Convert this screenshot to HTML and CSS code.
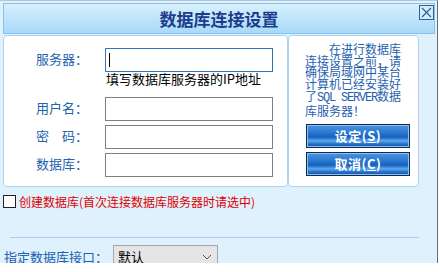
FILE: index.html
```html
<!DOCTYPE html>
<html lang="zh-CN">
<head>
<meta charset="utf-8">
<title>数据库连接设置</title>
<link rel="stylesheet" href="styles.css">
</head>
<body>
<div class="window">
  <div class="titlebar">
    <span></span>
    <h1 class="title">数据库连接设置</h1>
    <span class="close"><svg width="13" height="13" viewBox="0 0 13 13"><path d="M2 2 L11 11 M11 2 L2 11" stroke="#2c5f9c" stroke-width="1.2" fill="none"/></svg></span>
  </div>
  <div class="panels">
    <div class="panel panel-form">
      <div class="form">
        <span class="label">服务器：</span><div class="input focus"><span class="caret"></span></div>
        <div class="hint">填写数据库服务器的IP地址</div>
        <span class="label">用户名：</span><div class="input"></div>
        <span class="label">密　码：</span><div class="input"></div>
        <span class="label">数据库：</span><div class="input"></div>
      </div>
    </div>
    <div class="panel panel-side">
      <p class="note">在进行数据库<br>连接设置之前，请<br>确保局域网中某台<br>计算机已经安装好<br>了<span class="mono">SQL SERVER</span>数据<br>库服务器！</p>
      <div class="btn">设定(<u>S</u>)</div>
      <div class="btn">取消(<u>C</u>)</div>
    </div>
  </div>
  <div class="create"><span class="checkbox"></span><span class="create-text">创建数据库(首次连接数据库服务器时请选中)</span></div>
  <div class="sep"></div>
  <div class="iface">
    <span class="iface-label">指定数据库接口：</span>
    <div class="select"><span>默认</span><svg width="10" height="6" viewBox="0 0 10 6"><path d="M1 1 L5 5 L9 1" stroke="#555" stroke-width="1" fill="none"/></svg></div>
  </div>
</div>
</body>
</html>
```
FILE: styles.css
```css
* { box-sizing: border-box; }
html, body { margin: 0; padding: 0; background: #ffffff; }
body { font-family: "Noto Sans CJK SC", "Noto Sans", sans-serif; }

.window {
  width: 438px;
  height: 263px;
  overflow: hidden;
  background: #dff1fc;
  border-top: 1px solid #b9c6d2;
  border-right: 1px solid #6b6b6b;
  padding: 2px 0 0 3px;
}

.titlebar {
  width: 432px;
  height: 31px;
  border: 1px solid #86c2ec;
  background: linear-gradient(#d8f0fe, #bfe4fb 50%, #a9d9f8);
  display: grid;
  grid-template-columns: 1fr auto 1fr;
  align-items: center;
}
.title {
  margin: 0;
  font-size: 17px;
  font-weight: bold;
  color: #1b3d8d;
  line-height: 20px;
  letter-spacing: 0;
}
.close {
  justify-self: end;
  align-self: start;
  margin-top: 1px;
  width: 15px;
  height: 15px;
  border: 1px solid #2c5f9c;
  background: #d3ecfc;
  display: flex;
  align-items: center;
  justify-content: center;
}

.panels {
  display: flex;
  margin-top: 1px;
  height: 152px;
}
.panel {
  background: #ffffff;
  border: 1px solid #aed4ef;
  border-radius: 4px;
}
.panel-form { width: 285px; }
.panel-side { width: 131px; padding: 7px 0 0 16px; }

.form {
  display: grid;
  grid-template-columns: 69px 168px;
  row-gap: 4px;
  padding: 12px 0 0 32px;
}
.label {
  font-size: 13px;
  color: #2262ae;
  line-height: 15px;
  align-self: center;
  margin-bottom: 3px;
  white-space: nowrap;
}
.input {
  height: 24px;
  border: 1px solid #7f7f7f;
  background: #ffffff;
  padding: 4px 0 0 3px;
}
.input.focus {
  border-color: #2b78c0;
  height: 24px;
}
.caret {
  display: block;
  width: 1px;
  height: 14px;
  background: #000;
}
.hint {
  grid-column: 2;
  margin-top: -4px;
  height: 21px;
  font-size: 13px;
  line-height: 14px;
  color: #000;
  padding-left: 1px;
  white-space: nowrap;
}

.note {
  margin: 0;
  width: 100px;
  font-size: 12px;
  line-height: 11.7px;
  color: #1f5fb0;
  text-indent: 24px;
  white-space: nowrap;
}
.mono {
  font-family: "Liberation Mono", monospace;
  letter-spacing: -1.2px;
}
.btn {
  width: 104px;
  height: 24px;
  margin: 0 0 0 1px;
  border: 1px solid #0b2a5a;
  background: linear-gradient(#4d94de 0%, #2a78d0 35%, #1560bd 55%, #5ea8ec 72%, #2a74cc 85%, #0b4fa4 100%);
  box-shadow: inset 0 0 0 1px #8fc0ee;
  color: #ffffff;
  font-size: 13px;
  font-weight: bold;
  line-height: 21px;
  text-align: center;
  letter-spacing: 0.5px;
}
.note + .btn { margin-top: 8px; }
.btn + .btn { margin-top: 4px; }
.btn u { text-underline-offset: 1px; }

.create {
  display: flex;
  align-items: center;
  margin-top: 8px;
  height: 13px;
}
.checkbox {
  width: 13px;
  height: 13px;
  border: 1px solid #222;
  background: #fff;
  flex: none;
}
.create-text {
  margin-left: 3px;
  font-size: 12px;
  line-height: 14px;
  color: #e00000;
  white-space: nowrap;
}

.sep {
  height: 1px;
  background: #a9d1ef;
  margin: 29px 0 0 7px;
  width: 409px;
}

.iface {
  display: flex;
  align-items: center;
  margin-top: 7px;
}
.iface-label {
  width: 110px;
  padding-left: 1px;
  font-size: 13px;
  color: #2262ae;
  white-space: nowrap;
}
.select {
  width: 105px;
  height: 23px;
  border: 1px solid #a7a7a7;
  background: #e5e5e5;
  display: flex;
  align-items: center;
  justify-content: space-between;
  padding: 0 5px 0 4px;
  font-size: 13px;
  color: #000;
}
```
